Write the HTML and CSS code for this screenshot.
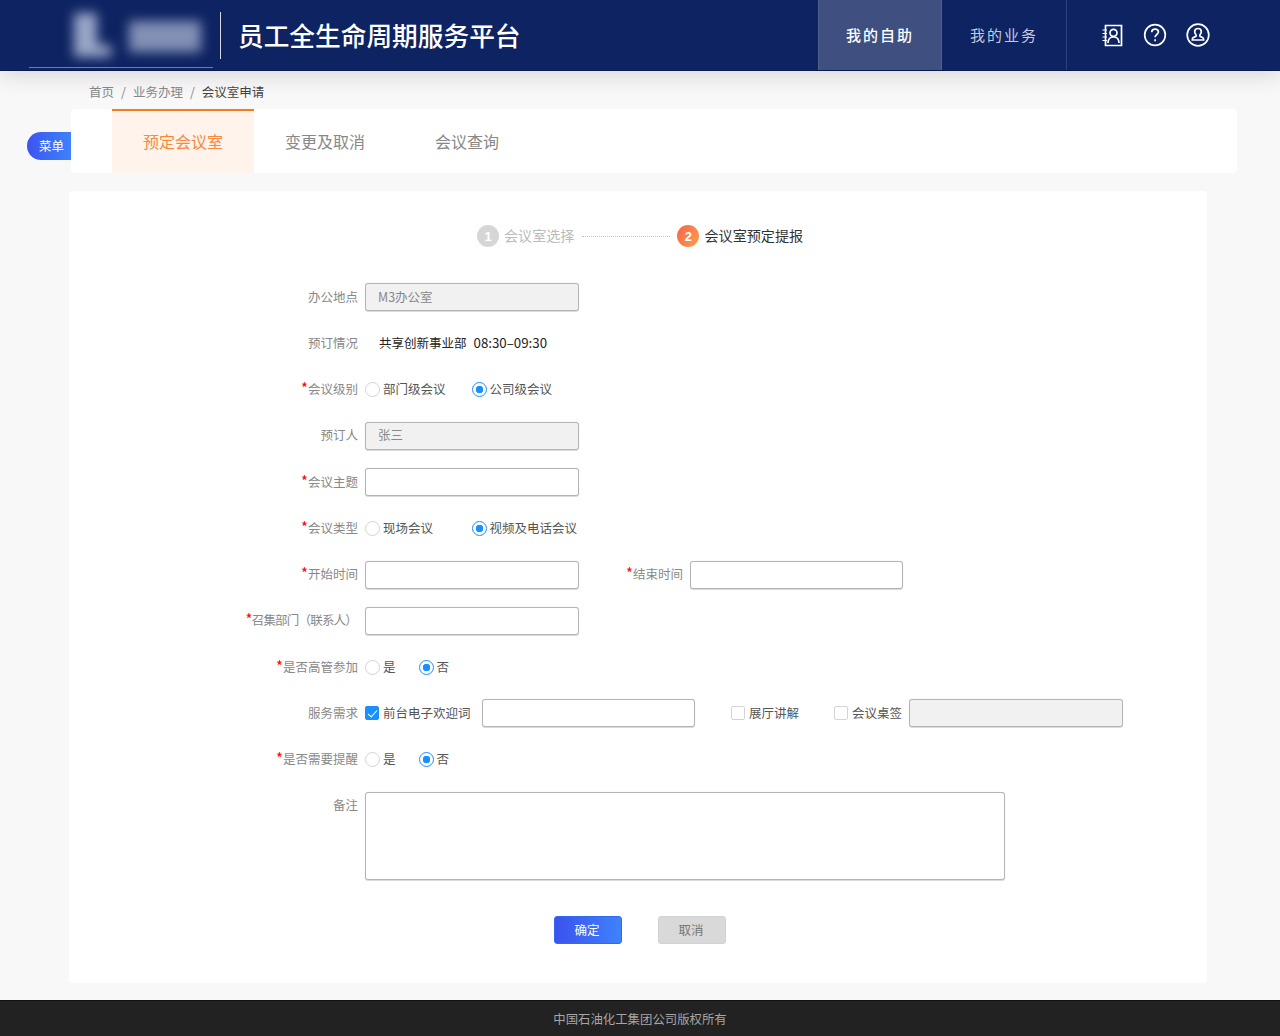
FILE: index.html
```html
<!DOCTYPE html>
<html lang="zh-CN">
<head>
<meta charset="utf-8">
<title>会议室申请</title>
<link rel="stylesheet" href="styles.css">
</head>
<body>
<header class="topbar">
  <div class="logo">
    <svg class="logo-art" width="184" height="67" viewBox="0 0 184 67" aria-hidden="true">
      <path d="M45 13h23v32h14v12H45z" fill="#9aa7c8"/>
      <path d="M100 21h72v31H100z" fill="#8290b6"/>
    </svg>
  </div>
  <h1 class="app-title">员工全生命周期服务平台</h1>
  <nav class="mainnav">
    <a class="mainnav-item is-active">我的自助</a>
    <a class="mainnav-item">我的业务</a>
  </nav>
  <div class="tools">
    <svg class="tool" width="24" height="24" viewBox="0 0 24 24" fill="none" stroke="#fff" stroke-width="1.700" aria-hidden="true">
      <path d="M5.500 2.500h16v20h-16z"/>
      <path d="M2.500 7h4.500M2.500 10.500h4.500M2.500 14h4.500M2.500 17.500h4.500" stroke-width="1.200"/>
      <circle cx="13.500" cy="9.800" r="3.500"/>
      <path d="M8 20c0-4 2.500-6.200 5.500-6.200S19 16 19 20"/>
    </svg>
    <svg class="tool" width="24" height="24" viewBox="0 0 24 24" fill="none" stroke="#fff" stroke-width="1.700" aria-hidden="true">
      <circle cx="12" cy="12" r="10.300"/>
      <path d="M8.700 9.300c0-2 1.500-3.200 3.400-3.200 1.900 0 3.300 1.200 3.300 2.900 0 2.400-3.300 2.600-3.300 5.200"/>
      <path d="M12.100 16.300v2"/>
    </svg>
    <svg class="tool" width="24" height="24" viewBox="0 0 24 24" fill="none" stroke="#fff" stroke-width="1.700" aria-hidden="true">
      <circle cx="12" cy="12" r="10.800"/>
      <path d="M12 5.500c-2 0-3.300 1.500-3.300 3.300 0 1.500.7 2.300 1.300 3 .5.700.2 1.500-.6 1.800-1.400.5-3 1-3 2.400v1h11.200v-1c0-1.400-1.600-1.900-3-2.400-.8-.3-1.100-1.100-.6-1.800.6-.7 1.300-1.500 1.300-3 0-1.800-1.300-3.300-3.300-3.300z"/>
    </svg>
  </div>
</header>

<div class="breadcrumb">
  <span>首页</span><i>/</i><span>业务办理</span><i>/</i><span class="current">会议室申请</span>
</div>

<div class="tabs-wrap">
  <button class="menu-pill" type="button">菜单</button>
  <div class="tabs">
    <a class="tab is-active">预定会议室</a>
    <a class="tab">变更及取消</a>
    <a class="tab">会议查询</a>
  </div>
</div>

<main class="card">
  <div class="steps">
    <span class="step-num">1</span><span class="step-text">会议室选择</span>
    <span class="step-line"></span>
    <span class="step-num is-current">2</span><span class="step-text is-current">会议室预定提报</span>
  </div>

  <form class="form">
    <div class="row">
      <label class="lbl">办公地点</label>
      <input class="field is-disabled" type="text" value="M3办公室" readonly>
    </div>
    <div class="row">
      <label class="lbl">预订情况</label>
      <span class="booking"><span>共享创新事业部</span><span class="booking-time">08:30–09:30</span></span>
    </div>
    <div class="row">
      <label class="lbl req">会议级别</label>
      <label class="opt opt-w"><input type="radio" name="level"><span>部门级会议</span></label>
      <label class="opt"><input type="radio" name="level" checked><span>公司级会议</span></label>
    </div>
    <div class="row">
      <label class="lbl">预订人</label>
      <input class="field is-disabled" type="text" value="张三" readonly>
    </div>
    <div class="row">
      <label class="lbl req">会议主题</label>
      <input class="field" type="text">
    </div>
    <div class="row">
      <label class="lbl req">会议类型</label>
      <label class="opt opt-w"><input type="radio" name="kind"><span>现场会议</span></label>
      <label class="opt"><input type="radio" name="kind" checked><span>视频及电话会议</span></label>
    </div>
    <div class="row">
      <label class="lbl req">开始时间</label>
      <input class="field" type="text">
      <label class="lbl lbl-second req">结束时间</label>
      <input class="field field-sm" type="text">
    </div>
    <div class="row">
      <label class="lbl lbl-tight req">召集部门（联系人）</label>
      <input class="field" type="text">
    </div>
    <div class="row">
      <label class="lbl req">是否高管参加</label>
      <label class="opt opt-n"><input type="radio" name="exec"><span>是</span></label>
      <label class="opt"><input type="radio" name="exec" checked><span>否</span></label>
    </div>
    <div class="row">
      <label class="lbl">服务需求</label>
      <label class="opt opt-greet"><input type="checkbox" checked><span>前台电子欢迎词</span></label>
      <input class="field field-sm" type="text">
      <label class="opt opt-hall"><input type="checkbox"><span>展厅讲解</span></label>
      <label class="opt opt-card"><input type="checkbox"><span>会议桌签</span></label>
      <input class="field is-disabled" type="text" readonly>
    </div>
    <div class="row">
      <label class="lbl req">是否需要提醒</label>
      <label class="opt opt-n"><input type="radio" name="remind"><span>是</span></label>
      <label class="opt"><input type="radio" name="remind" checked><span>否</span></label>
    </div>
    <div class="row row-area">
      <label class="lbl">备注</label>
      <textarea class="area"></textarea>
    </div>
  </form>

  <div class="actions">
    <button class="btn btn-primary" type="button">确定</button>
    <button class="btn btn-muted" type="button">取消</button>
  </div>
</main>

<footer class="footer">中国石油化工集团公司版权所有</footer>
</body>
</html>
```

FILE: styles.css
```css
* { box-sizing: border-box; }
html, body { margin: 0; padding: 0; }
body {
  width: 1280px;
  height: 1036px;
  overflow: hidden;
  display: flex;
  flex-direction: column;
  background: #f8f8f8;
  color: #666;
  font-family: "Noto Sans CJK SC", "Noto Sans", sans-serif;
  font-size: 12.5px;
}

/* top bar */
.topbar {
  flex: none;
  height: 71px;
  display: flex;
  align-items: stretch;
  background: #0e2362;
  border-bottom: 1px solid #0a1a4c;
  box-shadow: 0 4px 22px rgba(0, 0, 0, .14);
  position: relative;
  z-index: 1;
}
.logo {
  margin-left: 29px;
  width: 184px;
  height: 68px;
  border-bottom: 1px solid #6d7ca6;
  overflow: hidden;
}
.logo-art { display: block; filter: blur(6px); }
.app-title {
  margin: 12px 0 0 7px;
  height: 47px;
  width: 598px;
  padding-left: 17px;
  border-left: 1px solid #d5d9e6;
  color: #fff;
  font-size: 25.700px;
  font-weight: 500;
  line-height: 45px;
}
.mainnav { display: flex; }
.mainnav-item {
  width: 124px;
  height: 70px;
  padding-bottom: 2px;
  display: flex;
  align-items: center;
  justify-content: center;
  color: #c3cadf;
  font-size: 15px;
  letter-spacing: 2px;
}
.mainnav-item.is-active {
  background: #3e4f80;
  border: solid #4f5f8e;
  border-width: 0 1px;
  color: #fff;
  font-weight: 500;
}
.tools {
  display: flex;
  align-items: center;
  gap: 19px;
  height: 70px;
  padding-left: 33px;
  border-left: 1px solid #2f4279;
}
.tool { display: block; }

/* breadcrumb */
.breadcrumb {
  flex: none;
  height: 38px;
  padding: 12px 0 0 89px;
  display: flex;
  align-items: flex-start;
  gap: 7px;
  color: #888;
  line-height: 18px;
}
.breadcrumb i { font-style: normal; color: #888; }
.breadcrumb .current { color: #444; }

/* tabs */
.tabs-wrap {
  flex: none;
  height: 64px;
  margin-left: 71px;
  width: 1166px;
  position: relative;
}
.tabs {
  height: 64px;
  padding-left: 41px;
  display: flex;
  background: #fff;
  border-radius: 4px;
}
.tab {
  width: 142px;
  padding-bottom: 1px;
  display: flex;
  align-items: center;
  justify-content: center;
  color: #888;
  font-size: 16px;
}
.tab.is-active {
  background: #fff3ec;
  box-shadow: inset 0 2px 0 #f87a1f;
  color: #f98a3c;
}
.menu-pill {
  position: absolute;
  left: -44px;
  top: 23px;
  width: 44px;
  height: 28px;
  padding: 0 0 2px 5px;
  border: 0;
  border-radius: 14px 0 0 14px;
  background: linear-gradient(90deg, #3b54f0, #3f82fb);
  color: #fff;
  font: inherit;
}

/* main card */
.card {
  flex: none;
  margin: 18px 0 0 69px;
  width: 1138px;
  height: 792px;
  padding-top: 34px;
  background: #fff;
  border-radius: 4px;
}
.steps {
  height: 22px;
  padding-left: 408px;
  display: flex;
  align-items: center;
  font-size: 14.100px;
}
.step-num {
  flex: none;
  width: 22px;
  height: 22px;
  border-radius: 50%;
  display: flex;
  align-items: center;
  justify-content: center;
  background: #d6d6d6;
  color: #fff;
  font-family: "Liberation Sans", sans-serif;
  font-size: 13px;
  font-weight: 700;
}
.step-num.is-current { background: linear-gradient(120deg, #f7634a, #fd9f4a); }
.step-text { margin-left: 5px; padding-bottom: 2px; color: #bbb; }
.step-text.is-current { margin-left: 5px; color: #333; }
.step-line {
  width: 88px;
  margin: 0 7px 0 8px;
  border-top: 1px dotted #c4c4c4;
}

/* form */
.form {
  margin-top: 36px;
  display: flex;
  flex-direction: column;
  gap: 18.250px;
}
.row {
  height: 28px;
  display: flex;
  align-items: center;
}
.row-area { height: 88px; align-items: flex-start; }
.row-area .lbl { line-height: 26px; }
.lbl {
  flex: none;
  width: 289px;
  margin-right: 7px;
  padding-bottom: 2px;
  text-align: right;
  color: #888;
  white-space: nowrap;
}
.lbl-second { width: 104px; }
.lbl-tight { letter-spacing: -.8px; padding-right: 1px; }
.req::before {
  content: "*";
  color: #f00;
  font-size: 15px;
  line-height: 1;
}
.field {
  flex: none;
  width: 214px;
  height: 28px;
  padding: 0 12px 2px;
  border: 1px solid #b4b4b4;
  border-radius: 3px;
  background: #fff;
  color: #888;
  font: inherit;
  outline: none;
  box-shadow: 0 0 1px #d0d0d0, 0 1px 0 #dcdcdc;
}
.field-sm { width: 213px; }
.field.is-disabled { background: #f1f1f1; }
.area {
  width: 640px;
  height: 88px;
  margin: 0;
  border: 1px solid #b4b4b4;
  border-radius: 3px;
  background: #fff;
  resize: none;
  outline: none;
  box-shadow: 0 0 1px #d0d0d0, 0 1px 0 #dcdcdc;
}
.booking {
  margin-left: 14px;
  padding-bottom: 2px;
  display: flex;
  align-items: baseline;
  gap: 7px;
  color: #222;
}
.booking-time { font-size: 13.300px; }
.opt {
  flex: none;
  display: flex;
  align-items: center;
  gap: 3px;
  color: #555;
}
.opt span { padding-bottom: 2px; }
.opt-w { width: 106.500px; }
.opt-n { width: 53.500px; }
.opt-greet { width: 117px; }
.opt-hall { margin-left: 36px; width: 103px; }
.opt-card { width: 75px; }
.opt input {
  appearance: none;
  -webkit-appearance: none;
  flex: none;
  margin: 0;
  border: 1px solid #d4d4d4;
  background: #fff;
}
.opt input[type="radio"] { width: 15px; height: 15px; border-radius: 50%; }
.opt input[type="checkbox"] { width: 14px; height: 14px; border-radius: 2px; margin-right: 1px; }
.opt input[type="radio"]:checked {
  border-color: #1890ff;
  background: radial-gradient(circle, #1890ff 0 3.500px, #fff 4px);
}
.opt input[type="checkbox"]:checked {
  border-color: #1890ff;
  background: #1890ff;
  position: relative;
}
.opt input[type="checkbox"]:checked::after {
  content: "";
  position: absolute;
  left: 3.500px;
  top: 1px;
  width: 4px;
  height: 8px;
  border: solid #fff;
  border-width: 0 1.200px 1.200px 0;
  transform: rotate(42deg);
}

/* buttons */
.actions {
  margin: 36px 0 0 485px;
  display: flex;
  gap: 36px;
}
.btn {
  width: 68px;
  height: 28px;
  padding: 0 2px 0 0;
  border-radius: 3px;
  font: inherit;
}
.btn-primary {
  border: 1px solid #2f6bf2;
  background: linear-gradient(90deg, #3c52ee, #3f82fb);
  color: #fff;
}
.btn-muted {
  border: 1px solid #d2d2d2;
  background: #d9d9d9;
  color: #777;
}

/* footer */
.footer {
  flex: none;
  margin-top: 17px;
  height: 36px;
  display: flex;
  align-items: center;
  justify-content: center;
  background: #222;
  border-top: 1px solid #111;
  color: #a5a5a5;
  font-size: 12.400px;
}
```
